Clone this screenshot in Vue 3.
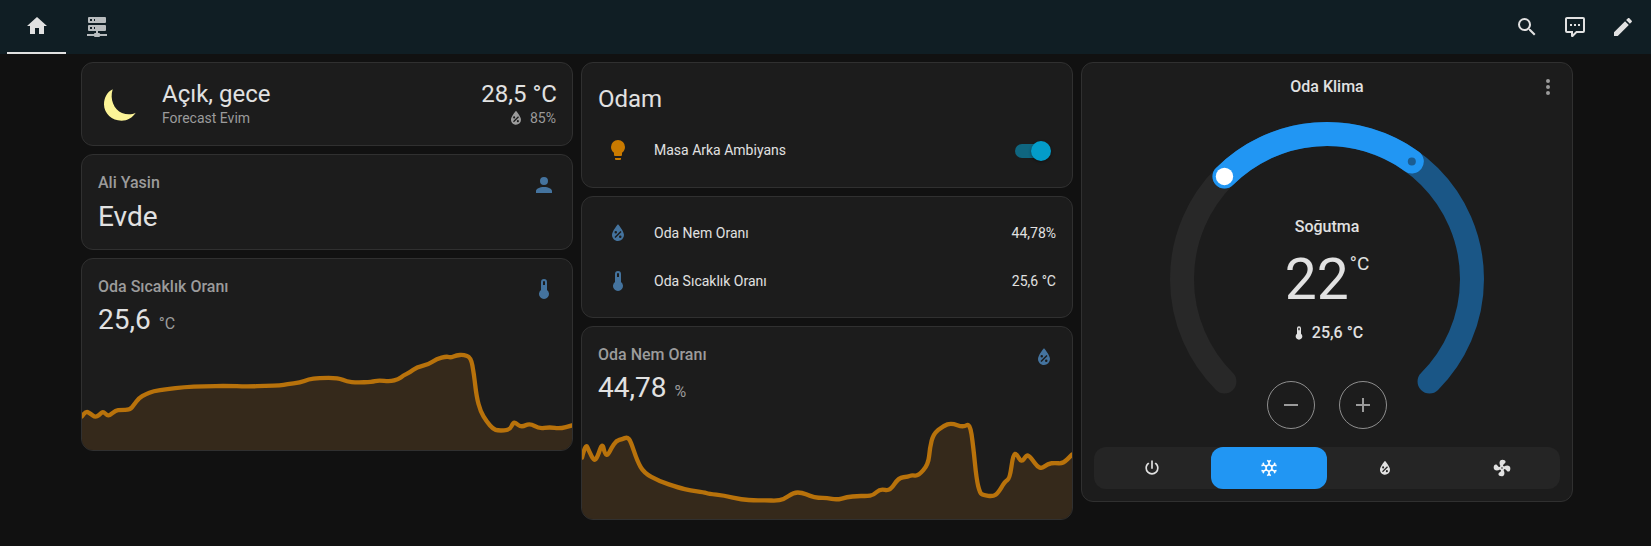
<template>
  <div class="page">
    <header class="topbar">
      <nav class="tabs">
        <a class="tab active">
          <svg class="icon" viewBox="0 0 24 24"><path :d="icons.home" /></svg>
        </a>
        <a class="tab">
          <svg class="icon" viewBox="0 0 24 24"><path :d="icons.server" /></svg>
        </a>
      </nav>
      <div class="actions">
        <button v-for="name in ['search', 'comment', 'pencil']" :key="name" class="action">
          <svg class="icon" viewBox="0 0 24 24"><path :d="icons[name]" /></svg>
        </button>
      </div>
    </header>

    <main class="board">
      <!-- Left column -->
      <section class="column">
        <div class="card weather">
          <svg class="moon" viewBox="0 0 40 40"><path d="M11.700 4.300C6 7 3 13 3 19.500C3 28.500 11 35.700 20.500 35.700C26.500 35.700 31.500 32.500 34.700 27.700C31 29.700 26 30 21 28C13 25 8.500 14 11.700 4.300Z" /></svg>
          <div class="weather-name">
            <div class="weather-state">Açık, gece</div>
            <div class="weather-sub">Forecast Evim</div>
          </div>
          <div class="weather-right">
            <div class="weather-temp">28,5 °C</div>
            <div class="weather-hum">
              <svg class="icon-hum" viewBox="0 0 24 24"><path :d="icons.water" /></svg>
              <span>85%</span>
            </div>
          </div>
        </div>

        <div class="card person">
          <div class="person-text">
            <div class="tile-title">Ali Yasin</div>
            <div class="person-state">Evde</div>
          </div>
          <svg class="icon blue" viewBox="0 0 24 24"><path :d="icons.account" /></svg>
        </div>

        <div class="card graph graph-temp">
          <div class="graph-head">
            <div>
              <div class="tile-title">{{ tempGraph.title }}</div>
              <div class="graph-value">{{ tempGraph.value }}<span>{{ tempGraph.unit }}</span></div>
            </div>
            <svg class="icon blue" viewBox="0 0 24 24"><path :d="icons[tempGraph.icon]" /></svg>
          </div>
          <svg class="chart" :viewBox="tempGraph.box" preserveAspectRatio="none">
            <path class="chart-fill" :d="tempGraph.area" />
            <path class="chart-line" :d="tempGraph.line" />
          </svg>
        </div>
      </section>

      <!-- Middle column -->
      <section class="column">
        <div class="card room">
          <h2 class="room-title">Odam</h2>
          <div class="row">
            <svg class="icon amber" viewBox="0 0 24 24"><path :d="icons.bulb" /></svg>
            <span class="row-name">Masa Arka Ambiyans</span>
            <span class="toggle"><i></i></span>
          </div>
        </div>

        <div class="card sensors">
          <div v-for="row in sensorRows" :key="row.name" class="row">
            <svg class="icon blue" viewBox="0 0 24 24"><path :d="icons[row.icon]" /></svg>
            <span class="row-name">{{ row.name }}</span>
            <span class="row-value">{{ row.value }}</span>
          </div>
        </div>

        <div class="card graph graph-hum">
          <div class="graph-head">
            <div>
              <div class="tile-title">{{ humGraph.title }}</div>
              <div class="graph-value">{{ humGraph.value }}<span>{{ humGraph.unit }}</span></div>
            </div>
            <svg class="icon blue" viewBox="0 0 24 24"><path :d="icons[humGraph.icon]" /></svg>
          </div>
          <svg class="chart" :viewBox="humGraph.box" preserveAspectRatio="none">
            <path class="chart-fill" :d="humGraph.area" />
            <path class="chart-line" :d="humGraph.line" />
          </svg>
        </div>
      </section>

      <!-- Right column -->
      <section class="column">
        <div class="card climate">
          <div class="climate-head">
            <span>Oda Klima</span>
            <svg class="icon dots" viewBox="0 0 24 24"><path :d="icons.dots" /></svg>
          </div>

          <div class="dial">
            <svg class="dial-svg" viewBox="0 0 320 320">
              <path :d="arc(135, 225)" class="arc arc-idle" />
              <path :d="arc(225, 405)" class="arc arc-range" />
              <path :d="arc(225, 305.800)" class="arc arc-active" />
              <circle :cx="polar(305.800).x" :cy="polar(305.800).y" r="4" fill="#1b5d92" />
              <circle :cx="polar(225).x" :cy="polar(225).y" r="8.700" fill="#fff" />
            </svg>
            <div class="dial-info">
              <div class="dial-mode">Soğutma</div>
              <div class="dial-target">22<sup>°C</sup></div>
              <div class="dial-current">
                <svg class="icon-temp" viewBox="0 0 24 24"><path :d="icons.thermometer" /></svg>
                <span>25,6 °C</span>
              </div>
            </div>
            <div class="dial-buttons">
              <button class="round"><svg class="icon" viewBox="0 0 24 24"><path :d="icons.minus" /></svg></button>
              <button class="round"><svg class="icon" viewBox="0 0 24 24"><path :d="icons.plus" /></svg></button>
            </div>
          </div>

          <div class="modes">
            <button v-for="mode in modes" :key="mode.icon" class="mode" :class="{ selected: mode.selected }">
              <svg class="icon-mode" viewBox="0 0 24 24"><path :d="icons[mode.icon]" /></svg>
            </button>
          </div>
        </div>
      </section>
    </main>
  </div>
</template>

<script setup>
const icons = {
  home: 'M10,20V14H14V20H19V12H22L12,3L2,12H5V20H10Z',
  server: 'M13,19H14A1,1 0 0,1 15,20H22V22H15A1,1 0 0,1 14,23H10A1,1 0 0,1 9,22H2V20H9A1,1 0 0,1 10,19H11V17H4A1,1 0 0,1 3,16V12A1,1 0 0,1 4,11H20A1,1 0 0,1 21,12V16A1,1 0 0,1 20,17H13V19M4,3H20A1,1 0 0,1 21,4V8A1,1 0 0,1 20,9H4A1,1 0 0,1 3,8V4A1,1 0 0,1 4,3M9,7H10V5H9V7M9,15H10V13H9V15M5,5V7H7V5H5M5,13V15H7V13H5Z',
  search: 'M9.5,3A6.5,6.5 0 0,1 16,9.5C16,11.11 15.41,12.59 14.44,13.73L14.71,14H15.5L20.5,19L19,20.5L14,15.5V14.71L13.73,14.44C12.59,15.41 11.11,16 9.5,16A6.5,6.5 0 0,1 3,9.5A6.5,6.5 0 0,1 9.5,3M9.5,5C7,5 5,7 5,9.5C5,12 7,14 9.5,14C12,14 14,12 14,9.5C14,7 12,5 9.5,5Z',
  comment: 'M9,22A1,1 0 0,1 8,21V18H4A2,2 0 0,1 2,16V4C2,2.89 2.9,2 4,2H20A2,2 0 0,1 22,4V16A2,2 0 0,1 20,18H13.9L10.2,21.71C10,21.9 9.75,22 9.5,22V22H9M10,16V19.08L13.08,16H20V4H4V16H10M17,11H15V9H17V11M13,11H11V9H13V11M9,11H7V9H9V11Z',
  pencil: 'M20.71,7.04C21.1,6.65 21.1,6 20.71,5.63L18.37,3.29C18,2.9 17.35,2.9 16.96,3.29L15.12,5.12L18.87,8.87M3,17.25V21H6.75L17.81,9.93L14.06,6.18L3,17.25Z',
  account: 'M12,4A4,4 0 0,1 16,8A4,4 0 0,1 12,12A4,4 0 0,1 8,8A4,4 0 0,1 12,4M12,14C16.42,14 20,15.79 20,18V20H4V18C4,15.79 7.58,14 12,14Z',
  thermometer: 'M15 13V5A3 3 0 0 0 9 5V13A5 5 0 1 0 15 13M12 4A1 1 0 0 1 13 5V8H11V5A1 1 0 0 1 12 4Z',
  water: 'M12,3.25C12,3.25 6,10 6,14C6,17.32 8.69,20 12,20A6,6 0 0,0 18,14C18,10 12,3.25 12,3.25M14.47,9.97L15.53,11.03L9.53,17.03L8.47,15.97M9.75,10A1.25,1.25 0 0,1 11,11.25A1.25,1.25 0 0,1 9.75,12.5A1.25,1.25 0 0,1 8.5,11.25A1.25,1.25 0 0,1 9.75,10M14.25,14.5A1.25,1.25 0 0,1 15.5,15.75A1.25,1.25 0 0,1 14.25,17A1.25,1.25 0 0,1 13,15.75A1.25,1.25 0 0,1 14.25,14.5Z',
  bulb: 'M12,2A7,7 0 0,0 5,9C5,11.38 6.19,13.47 8,14.74V17A1,1 0 0,0 9,18H15A1,1 0 0,0 16,17V14.74C17.81,13.47 19,11.38 19,9A7,7 0 0,0 12,2M9,21A1,1 0 0,0 10,22H14A1,1 0 0,0 15,21V20H9V21Z',
  dots: 'M12,16A2,2 0 0,1 14,18A2,2 0 0,1 12,20A2,2 0 0,1 10,18A2,2 0 0,1 12,16M12,10A2,2 0 0,1 14,12A2,2 0 0,1 12,14A2,2 0 0,1 10,12A2,2 0 0,1 12,10M12,4A2,2 0 0,1 14,6A2,2 0 0,1 12,8A2,2 0 0,1 10,6A2,2 0 0,1 12,4Z',
  minus: 'M19,13H5V11H19V13Z',
  plus: 'M19,13H13V19H11V13H5V11H11V5H13V11H19V13Z',
  power: 'M16.56,5.44L15.11,6.89C16.84,7.94 18,9.83 18,12A6,6 0 0,1 12,18A6,6 0 0,1 6,12C6,9.83 7.16,7.94 8.88,6.88L7.44,5.44C5.36,6.88 4,9.28 4,12A8,8 0 0,0 12,20A8,8 0 0,0 20,12C20,9.28 18.64,6.88 16.56,5.44M13,3H11V13H13',
  snow: 'M20.79,13.95L18.46,14.57L16.46,13.44V10.56L18.46,9.43L20.79,10.05L21.31,8.12L19.54,7.65L20,5.88L18.07,5.36L17.45,7.69L15.45,8.82L13,7.38V5.12L14.71,3.41L13.29,2L12,3.29L10.71,2L9.29,3.41L11,5.12V7.38L8.5,8.82L6.5,7.69L5.92,5.36L4,5.88L4.47,7.65L2.7,8.12L3.22,10.05L5.55,9.43L7.55,10.56V13.45L5.55,14.58L3.22,13.96L2.7,15.89L4.47,16.36L4,18.12L5.93,18.64L6.55,16.31L8.55,15.18L11,16.62V18.88L9.29,20.59L10.71,22L12,20.71L13.29,22L14.7,20.59L13,18.88V16.62L15.5,15.17L17.5,16.3L18.12,18.63L20,18.12L19.53,16.35L21.3,15.88L20.79,13.95M9.5,10.56L12,9.11L14.5,10.56V13.44L12,14.89L9.5,13.44V10.56Z',
  fan: 'M12,11A1,1 0 0,0 11,12A1,1 0 0,0 12,13A1,1 0 0,0 13,12A1,1 0 0,0 12,11M12.5,2C17,2 17.11,5.57 14.75,6.75C13.76,7.24 13.32,8.29 13.13,9.22C13.61,9.42 14.03,9.73 14.35,10.13C18.05,8.13 22.03,8.92 22.03,12.5C22.03,17 18.46,17.1 17.28,14.73C16.78,13.74 15.72,13.3 14.79,13.11C14.59,13.59 14.28,14 13.88,14.34C15.87,18.03 15.08,22 11.5,22C7,22 6.91,18.42 9.27,17.24C10.25,16.75 10.69,15.71 10.89,14.79C10.4,14.59 9.97,14.27 9.65,13.87C5.96,15.85 2,15.07 2,11.5C2,7 5.56,6.89 6.74,9.26C7.24,10.25 8.29,10.68 9.22,10.87C9.41,10.39 9.73,9.97 10.14,9.65C8.15,5.96 8.94,2 12.5,2Z',
}

const sensorRows = [
  { icon: 'water', name: 'Oda Nem Oranı', value: '44,78%' },
  { icon: 'thermometer', name: 'Oda Sıcaklık Oranı', value: '25,6 °C' },
]

const modes = [
  { icon: 'power' },
  { icon: 'snow', selected: true },
  { icon: 'water' },
  { icon: 'fan' },
]

// smoothed line through the samples, same idea as mini-graph-card
const smooth = (pts) => {
  let d = `M${pts[0][0]},${pts[0][1]}`
  for (let i = 1; i < pts.length - 1; i++) {
    const mx = (pts[i][0] + pts[i + 1][0]) / 2
    const my = (pts[i][1] + pts[i + 1][1]) / 2
    d += ` Q${pts[i][0]},${pts[i][1]} ${mx},${my}`
  }
  const last = pts[pts.length - 1]
  return `${d} L${last[0]},${last[1]}`
}

const makeGraph = (info, pts, left, right, bottom) => {
  const line = smooth(pts)
  return {
    ...info,
    line,
    area: `${line} L${right},${bottom} L${left},${bottom} Z`,
    box: `${left} 300 ${right - left} ${bottom - 300}`,
  }
}

const tempGraph = makeGraph(
  { title: 'Oda Sıcaklık Oranı', value: '25,6', unit: '°C', icon: 'thermometer' },
  [[34, 500], [45, 483], [60, 492], [73, 502], [85, 497], [97, 484], [108, 496], [118, 497], [135, 482], [150, 480], [178, 480], [190, 465], [205, 445], [225, 433], [248, 424], [290, 418], [340, 412], [400, 409], [470, 408], [530, 410], [590, 408], [630, 407], [650, 403], [690, 398], [715, 388], [745, 384], [805, 384], [830, 395], [860, 398], [905, 396], [925, 391], [960, 395], [985, 388], [1000, 377], [1020, 367], [1040, 352], [1075, 344], [1100, 327], [1130, 319], [1142, 323], [1160, 316], [1180, 314], [1203, 322], [1212, 370], [1220, 440], [1232, 485], [1250, 515], [1270, 538], [1285, 543], [1320, 541], [1330, 518], [1337, 519], [1355, 533], [1380, 520], [1408, 537], [1440, 532], [1470, 537], [1507, 527]],
  34, 1507, 601,
)

const humGraph = makeGraph(
  { title: 'Oda Nem Oranı', value: '44,78', unit: '%', icon: 'water' },
  [[19, 415], [30, 372], [40, 395], [55, 425], [65, 415], [80, 370], [88, 405], [97, 408], [108, 385], [122, 365], [140, 360], [155, 354], [165, 365], [185, 425], [205, 460], [250, 485], [310, 505], [345, 513], [385, 518], [400, 523], [445, 528], [500, 540], [540, 543], [575, 542], [600, 544], [625, 540], [655, 519], [680, 519], [705, 530], [730, 535], [755, 535], [785, 541], [815, 533], [850, 529], [875, 530], [895, 527], [915, 508], [945, 515], [970, 475], [1000, 472], [1010, 467], [1030, 470], [1060, 435], [1065, 385], [1075, 345], [1105, 320], [1130, 312], [1165, 325], [1185, 312], [1195, 380], [1205, 480], [1215, 520], [1225, 527], [1255, 531], [1270, 520], [1290, 487], [1305, 478], [1315, 405], [1325, 403], [1340, 430], [1355, 408], [1365, 410], [1395, 452], [1420, 433], [1440, 431], [1465, 433], [1492, 406]],
  19, 1492, 598,
)

const polar = (deg) => {
  const a = (deg * Math.PI) / 180
  return { x: 160 + 145 * Math.cos(a), y: 160 + 145 * Math.sin(a) }
}

const arc = (from, to) => {
  const a = polar(from)
  const b = polar(to)
  return `M${a.x},${a.y} A145,145 0 ${to - from > 180 ? 1 : 0} 1 ${b.x},${b.y}`
}
</script>

<style>
html,
body {
  background: #111111;
}
</style>

<style scoped>
.page {
  min-height: 546px;
  background: #111111;
  color: #e1e1e1;
  font-family: Roboto, "Noto Sans", sans-serif;
  overflow: hidden;
}

.icon {
  width: 24px;
  height: 24px;
  display: block;
  fill: currentColor;
  flex-shrink: 0;
}

.blue {
  color: #44739e;
}

.amber {
  color: #c97a00;
}

/* Top bar */
.topbar {
  height: 54px;
  background: #101e24;
  display: flex;
  justify-content: space-between;
  align-items: stretch;
  padding: 0 4px 0 7px;
}

.tabs {
  display: flex;
}

.tab {
  width: 59px;
  display: flex;
  align-items: center;
  justify-content: center;
  color: #b8bcbe;
  border-bottom: 2px solid transparent;
  margin-right: 1px;
}

.tab.active {
  color: #e1e1e1;
  border-bottom-color: #e1e1e1;
}

.actions {
  display: flex;
  align-items: center;
}

.action {
  width: 48px;
  height: 48px;
  border: 0;
  background: none;
  color: #e1e1e1;
  padding: 12px;
}

/* Board */
.board {
  display: grid;
  grid-template-columns: repeat(3, 1fr);
  gap: 8px;
  padding: 8px 78px 0 81px;
  align-items: start;
}

.column {
  display: flex;
  flex-direction: column;
  gap: 8px;
}

.card {
  background: #1c1c1c;
  border: 1px solid #303030;
  border-radius: 12px;
  box-sizing: border-box;
  overflow: hidden;
}

/* Weather */
.weather {
  height: 84px;
  display: flex;
  align-items: center;
  padding: 0 16px 0 19px;
}

.moon {
  width: 40px;
  height: 40px;
  fill: #fcf497;
  margin-right: 21px;
  margin-top: 2px;
}

.weather-name {
  flex: 1;
  padding-bottom: 3px;
}

.weather-state,
.weather-temp {
  font-size: 24px;
  line-height: 28px;
}

.weather-state {
  margin-bottom: 3px;
}

.weather-temp {
  margin-right: -1px;
}

.weather-sub {
  font-size: 14px;
  line-height: 14px;
  color: #9b9b9b;
}

.weather-right {
  text-align: right;
}

.weather-hum {
  display: flex;
  justify-content: flex-end;
  align-items: center;
  gap: 4px;
  font-size: 14px;
  line-height: 20px;
  color: #9b9b9b;
}

.icon-hum {
  width: 20px;
  height: 20px;
  display: block;
  fill: currentColor;
}

/* Person tile */
.person {
  height: 96px;
  display: flex;
  justify-content: space-between;
  padding: 18px 16px 0;
}

.tile-title {
  font-size: 16px;
  font-weight: 500;
  line-height: 20px;
  color: #9b9b9b;
}

.person-state {
  font-size: 28px;
  line-height: 36px;
  margin-top: 6px;
}

/* Graph cards */
.graph {
  display: flex;
  flex-direction: column;
  justify-content: space-between;
}

.graph-temp {
  height: 193px;
}

.graph-hum {
  height: 194px;
}

.graph-head {
  display: flex;
  justify-content: space-between;
  padding: 18px 16px 0;
}

.graph-value {
  font-size: 28px;
  line-height: 36px;
  margin-top: 5px;
}

.graph-value span {
  font-size: 16px;
  color: #9b9b9b;
  margin-left: 8px;
}

.chart {
  display: block;
  width: 100%;
  height: 100px;
  flex-shrink: 0;
}

.chart-fill {
  fill: #35291b;
}

.chart-line {
  fill: none;
  stroke: #b8720b;
  stroke-width: 13;
  stroke-linejoin: round;
  stroke-linecap: round;
}

/* Entity rows */
.room {
  height: 126px;
  padding: 0 16px;
}

.room-title {
  margin: 0;
  padding-top: 20px;
  font-size: 24px;
  font-weight: 400;
  line-height: 32px;
}

.row {
  height: 48px;
  display: flex;
  align-items: center;
  font-size: 14px;
}

.row .icon {
  margin-right: 24px;
  margin-left: 8px;
}

.room .row {
  margin-top: 11px;
}

.row-name {
  flex: 1;
}

.sensors {
  height: 122px;
  padding: 12px 16px 0;
}

.toggle {
  width: 34px;
  height: 14px;
  border-radius: 7px;
  background: #0f6680;
  display: flex;
  justify-content: flex-end;
  align-items: center;
  margin-right: 7px;
  margin-top: 2px;
}

.toggle i {
  display: block;
  width: 20px;
  height: 20px;
  border-radius: 50%;
  background: #039cc9;
  margin-right: -2px;
  box-shadow: 0 1px 3px rgba(0, 0, 0, 0.4);
}

/* Climate card */
.climate {
  height: 440px;
  display: flex;
  flex-direction: column;
}

.climate-head {
  position: relative;
  height: 47px;
  display: flex;
  align-items: center;
  justify-content: center;
  font-size: 16px;
  font-weight: 500;
  padding-bottom: 1px;
  box-sizing: border-box;
}

.dots {
  position: absolute;
  right: 12px;
  top: 12px;
  color: #9b9b9b;
}

.dial {
  position: relative;
  width: 320px;
  height: 310px;
  margin: 9px auto 0;
}

.dial-svg {
  display: block;
  width: 320px;
  height: 320px;
}

.arc {
  fill: none;
  stroke-width: 24;
  stroke-linecap: round;
}

.arc-idle {
  stroke: #282828;
}

.arc-range {
  stroke: #1a5686;
}

.arc-active {
  stroke: #2196f3;
}

.dial-info {
  position: absolute;
  top: 96px;
  left: 0;
  right: 0;
  display: flex;
  flex-direction: column;
  align-items: center;
}

.dial-mode {
  font-size: 16px;
  font-weight: 500;
  line-height: 24px;
}

.dial-target {
  display: flex;
  align-items: flex-start;
  font-size: 57px;
  line-height: 64px;
  margin-top: 9px;
}

.dial-target sup {
  font-size: 19px;
  line-height: 24px;
  margin-top: 4px;
  margin-left: 1px;
}

.dial-current {
  display: flex;
  align-items: center;
  gap: 5px;
  font-size: 16px;
  font-weight: 500;
  line-height: 24px;
  margin-top: 9px;
}

.icon-temp {
  width: 16px;
  height: 16px;
  display: block;
  fill: currentColor;
}

.dial-buttons {
  position: absolute;
  bottom: 0;
  left: 0;
  right: 0;
  display: flex;
  justify-content: center;
  gap: 24px;
}

.round {
  width: 48px;
  height: 48px;
  box-sizing: border-box;
  border: 1px solid #8e8e8e;
  border-radius: 50%;
  background: none;
  color: #9b9b9b;
  padding: 11px;
}

.modes {
  display: flex;
  height: 42px;
  margin: 18px 12px 0;
  background: #252525;
  border-radius: 12px;
  overflow: hidden;
}

.mode {
  flex: 1;
  border: 0;
  background: none;
  color: #e1e1e1;
  display: flex;
  align-items: center;
  justify-content: center;
  padding: 0;
  border-radius: 12px;
}

.mode.selected {
  background: #2196f3;
  color: #fff;
}

.icon-mode {
  width: 20px;
  height: 20px;
  fill: currentColor;
}
</style>
